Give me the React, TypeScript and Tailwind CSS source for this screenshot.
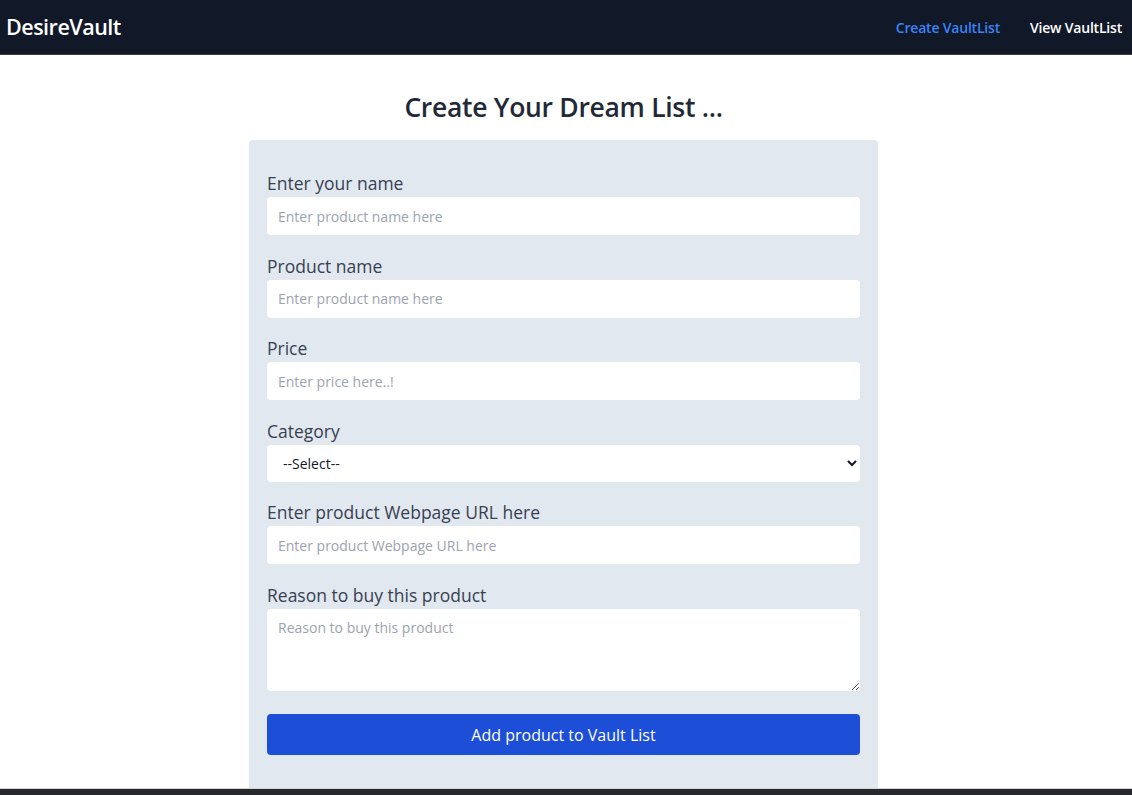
import React from 'react';

const App: React.FC = () => {
  const fields = [
    { label: 'Enter your name', placeholder: 'Enter product name here' },
    { label: 'Product name', placeholder: 'Enter product name here' },
    { label: 'Price', placeholder: 'Enter price here..!' },
  ];

  return (
    <div className="h-[795px] overflow-hidden flex flex-col bg-white font-['Open_Sans','Noto_Sans',sans-serif]">
      {/* Navbar */}
      <nav className="h-[55px] shrink-0 bg-[#111827] border-b border-[#3a3f47] flex items-center justify-between pl-[6px] pr-[10px]">
        <span className="text-white text-[21.5px] font-semibold tracking-[-0.5px]">DesireVault</span>
        <div className="flex items-center gap-[30px] text-[14px] font-semibold tracking-[-0.2px]">
          <a className="text-[#3b82f6]">Create VaultList</a>
          <a className="text-white">View VaultList</a>
        </div>
      </nav>

      {/* Main */}
      <main className="flex-1 flex flex-col items-center overflow-hidden pr-[5px]">
        <h1 className="mt-[34px] text-[26.5px] font-semibold text-[#1f2937] leading-[36px] tracking-[-0.3px]">
          Create Your Dream List ...
        </h1>
        <div className="mt-[15px] w-[629px] flex-1 bg-[#e2e8f0] rounded-t-[4px] px-[18px] pt-[29px]">
          <form className="flex flex-col gap-[16.5px]" onSubmit={(e) => e.preventDefault()}>
            {fields.map((f, i) => (
              <div key={i} className="flex flex-col">
                <label className="text-[17.5px] leading-[28px] text-[#374151]">{f.label}</label>
                <input
                  placeholder={f.placeholder}
                  className="h-[38px] bg-white rounded-[4px] px-[11px] text-[14px] text-gray-700 placeholder:text-[#9ca3af] outline-none"
                />
              </div>
            ))}
            <div className="flex flex-col">
              <label className="text-[17.5px] leading-[28px] text-[#374151]">Category</label>
              <select className="h-[37px] bg-white rounded-[4px] px-[12px] text-[14px] text-[#111827] outline-none">
                <option>--Select--</option>
              </select>
            </div>
            <div className="flex flex-col">
              <label className="text-[17.5px] leading-[28px] text-[#374151]">Enter product Webpage URL here</label>
              <input
                placeholder="Enter product Webpage URL here"
                className="h-[38px] bg-white rounded-[4px] px-[11px] text-[14px] text-gray-700 placeholder:text-[#9ca3af] outline-none"
              />
            </div>
            <div className="flex flex-col">
              <label className="text-[17.5px] leading-[28px] text-[#374151]">Reason to buy this product</label>
              <textarea
                placeholder="Reason to buy this product"
                className="h-[82px] bg-white rounded-[4px] px-[11px] py-[8px] text-[14px] text-gray-700 placeholder:text-[#9ca3af] outline-none"
              />
            </div>
            <button className="mt-[7px] h-[41px] bg-[#1d4ed8] rounded-[4px] text-white text-[16px]">
              Add product to Vault List
            </button>
          </form>
        </div>
      </main>
      <div className="h-[7px] shrink-0 bg-[#27282c] border-t border-[#d4d4d4]" />
    </div>
  );
};

export default App;
